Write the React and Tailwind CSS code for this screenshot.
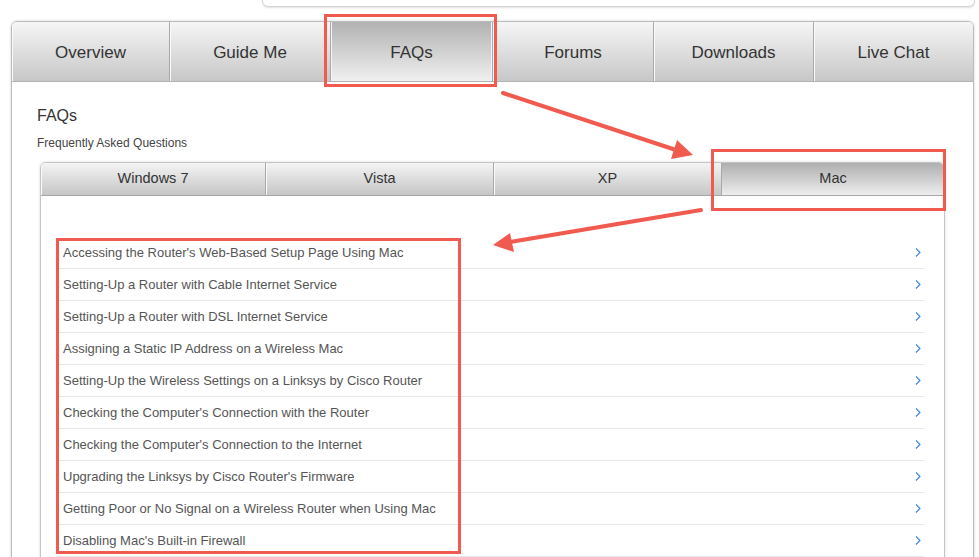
import React from "react";

const mainTabs = ["Overview", "Guide Me", "FAQs", "Forums", "Downloads", "Live Chat"];
const osTabs = ["Windows 7", "Vista", "XP", "Mac"];

const questions = [
  "Accessing the Router's Web-Based Setup Page Using Mac",
  "Setting-Up a Router with Cable Internet Service",
  "Setting-Up a Router with DSL Internet Service",
  "Assigning a Static IP Address on a Wireless Mac",
  "Setting-Up the Wireless Settings on a Linksys by Cisco Router",
  "Checking the Computer's Connection with the Router",
  "Checking the Computer's Connection to the Internet",
  "Upgrading the Linksys by Cisco Router's Firmware",
  "Getting Poor or No Signal on a Wireless Router when Using Mac",
  "Disabling Mac's Built-in Firewall",
];

const Chevron = () => (
  <svg width="6" height="9" viewBox="0 0 6 9" className="shrink-0">
    <polyline points="1,0.5 5,4.5 1,8.5" fill="none" stroke="#3a84d8" strokeWidth="1.1" />
  </svg>
);

// red callouts drawn over the page
const Annotations = () => (
  <svg className="absolute inset-0 pointer-events-none" width="979" height="557">
    <g fill="none" stroke="#f15a4f" strokeWidth="3">
      <rect x="325.5" y="15.5" width="170" height="70" />
      <rect x="712.5" y="150.5" width="232" height="59" />
      <rect x="57.5" y="239.5" width="402" height="313" />
    </g>
    <g stroke="#f15a4f" strokeWidth="4" strokeLinecap="round">
      <line x1="503" y1="93" x2="676" y2="150" />
      <line x1="701" y1="210" x2="510" y2="242" />
    </g>
    <g fill="#f15a4f">
      <polygon points="693,155 677,140 671,159" />
      <polygon points="493,245 510,233 514,252" />
    </g>
  </svg>
);

export default function App() {
  return (
    <div className="relative w-[979px] h-[557px] overflow-hidden bg-white font-['Liberation_Sans','Helvetica',sans-serif]">
      {/* bottom of the search box above */}
      <div className="ml-[262px] mr-[4px] h-[7px] rounded-b-[6px] border border-t-0 border-[#d4d4d4] shadow-[0_1px_2px_rgba(0,0,0,0.12)]" />

      <div className="ml-[11px] mr-[5px] mt-[14px] h-[600px] rounded-t-[6px] border border-[#bcbcbc] shadow-[0_0_3px_rgba(0,0,0,0.18)] overflow-hidden">
        {/* main tabs */}
        <div className="grid grid-cols-[157px_161px_162px_161px_160px_1fr] h-[60px] border-b border-[#b4b4b4]">
          {mainTabs.map((t, i) => (
            <div
              key={t}
              className={`flex items-center justify-center pt-[2px] text-[17px] text-[#333] ${
                i > 0 ? "border-l border-[#a9a9a9]" : ""
              } ${
                t === "FAQs"
                  ? "bg-gradient-to-b from-[#b2b2b2] to-[#f0f0f0] shadow-[inset_1px_0_0_#f4f4f4,inset_-1px_0_0_#f4f4f4]"
                  : "bg-gradient-to-b from-[#f6f6f6] to-[#c7c7c7] shadow-[inset_1px_0_0_#fafafa]"
              }`}
            >
              {t}
            </div>
          ))}
        </div>

        <div className="pl-[25px] pr-[28px] pt-[21px]">
          <h2 className="text-[16px] leading-[26px] text-[#333]">FAQs</h2>
          <p className="mt-[7px] text-[12px] leading-[14px] text-[#444]">Frequently Asked Questions</p>

          {/* OS sub tabs */}
          <div className="ml-[3px] mt-[12px] h-[420px] rounded-t-[6px] border border-[#c4c4c4] shadow-[0_0_3px_rgba(0,0,0,0.15)] overflow-hidden">
            <div className="grid grid-cols-[224px_228px_228px_1fr] h-[33px] border-b border-[#a8a8a8]">
              {osTabs.map((t, i) => (
                <div
                  key={t}
                  className={`flex items-center justify-center text-[14.5px] text-[#333] ${
                    i > 0 ? "border-l border-[#a9a9a9]" : ""
                  } ${
                    t === "Mac"
                      ? "bg-gradient-to-b from-[#afafaf] to-[#eeeeee]"
                      : "bg-gradient-to-b from-[#f4f4f4] to-[#c6c6c6] shadow-[inset_1px_0_0_#fafafa]"
                  }`}
                >
                  {t}
                </div>
              ))}
            </div>

            <ul className="ml-[16px] mr-[20px] pt-[41px]">
              {questions.map((q) => (
                <li
                  key={q}
                  className="flex items-center justify-between h-[32px] pl-[6px] pr-[3px] border-b border-[#e8e8e8] text-[13px] text-[#555]"
                >
                  <span>{q}</span>
                  <Chevron />
                </li>
              ))}
            </ul>
          </div>
        </div>
      </div>

      <Annotations />
    </div>
  );
}
